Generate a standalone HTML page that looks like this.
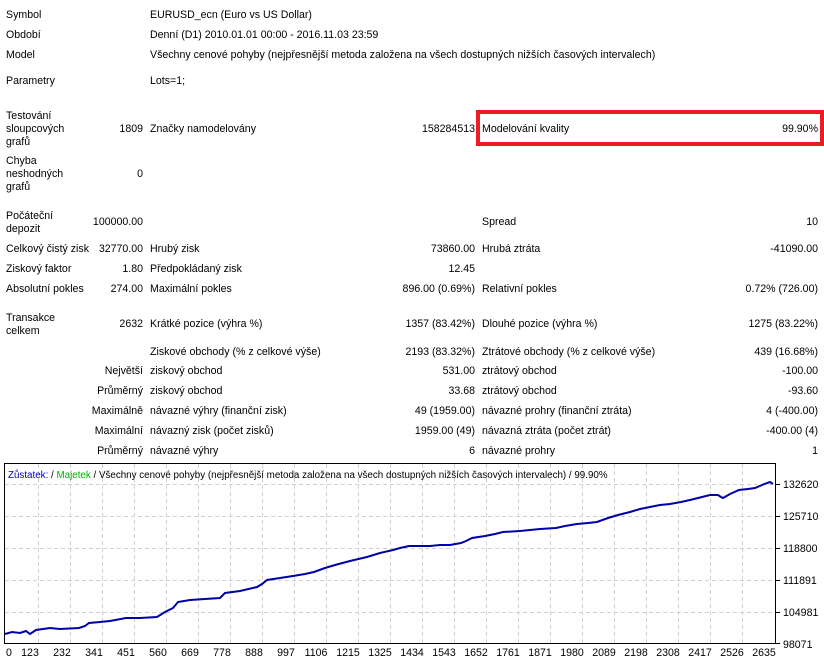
<!DOCTYPE html>
<html><head><meta charset="utf-8"><style>
body{margin:0;width:824px;height:662px;background:#fff;position:relative;overflow:hidden;font-family:Tahoma,"Liberation Sans",sans-serif;font-size:10.6px;color:#000}
.w{position:absolute;left:0;top:1px;width:824px;height:460px}
.t{position:absolute;line-height:13px;white-space:nowrap}
.r{text-align:right}
</style></head><body>
<div class="w">
<div class="t" style="left:6px;top:8px">Symbol</div>
<div class="t" style="left:150px;top:8px">EURUSD_ecn (Euro vs US Dollar)</div>
<div class="t" style="left:6px;top:28px">Období</div>
<div class="t" style="left:150px;top:28px">Denní (D1) 2010.01.01 00:00 - 2016.11.03 23:59</div>
<div class="t" style="left:6px;top:48px">Model</div>
<div class="t" style="left:150px;top:48px">Všechny cenové pohyby (nejpřesnější metoda založena na všech dostupných nižších časových intervalech)</div>
<div class="t" style="left:6px;top:74px">Parametry</div>
<div class="t" style="left:150px;top:74px">Lots=1;</div>

<div class="t" style="left:6px;top:109px">Testování<br>sloupcových<br>grafů</div>
<div class="t r" style="right:681px;top:122px">1809</div>
<div class="t" style="left:150px;top:122px">Značky namodelovány</div>
<div class="t r" style="right:349px;top:122px">158284513</div>
<div class="t" style="left:482px;top:122px">Modelování kvality</div>
<div class="t r" style="right:6px;top:122px">99.90%</div>

<div class="t" style="left:6px;top:154px">Chyba<br>neshodných<br>grafů</div>
<div class="t r" style="right:681px;top:167px">0</div>

<div class="t" style="left:6px;top:209px">Počáteční<br>depozit</div>
<div class="t r" style="right:681px;top:215px">100000.00</div>
<div class="t" style="left:482px;top:215px">Spread</div>
<div class="t r" style="right:6px;top:215px">10</div>

<div class="t" style="left:6px;top:242px">Celkový čistý zisk</div>
<div class="t r" style="right:681px;top:242px">32770.00</div>
<div class="t" style="left:150px;top:242px">Hrubý zisk</div>
<div class="t r" style="right:349px;top:242px">73860.00</div>
<div class="t" style="left:482px;top:242px">Hrubá ztráta</div>
<div class="t r" style="right:6px;top:242px">-41090.00</div>

<div class="t" style="left:6px;top:262px">Ziskový faktor</div>
<div class="t r" style="right:681px;top:262px">1.80</div>
<div class="t" style="left:150px;top:262px">Předpokládaný zisk</div>
<div class="t r" style="right:349px;top:262px">12.45</div>

<div class="t" style="left:6px;top:282px">Absolutní pokles</div>
<div class="t r" style="right:681px;top:282px">274.00</div>
<div class="t" style="left:150px;top:282px">Maximální pokles</div>
<div class="t r" style="right:349px;top:282px">896.00 (0.69%)</div>
<div class="t" style="left:482px;top:282px">Relativní pokles</div>
<div class="t r" style="right:6px;top:282px">0.72% (726.00)</div>

<div class="t" style="left:6px;top:311px">Transakce<br>celkem</div>
<div class="t r" style="right:681px;top:317px">2632</div>
<div class="t" style="left:150px;top:317px">Krátké pozice (výhra %)</div>
<div class="t r" style="right:349px;top:317px">1357 (83.42%)</div>
<div class="t" style="left:482px;top:317px">Dlouhé pozice (výhra %)</div>
<div class="t r" style="right:6px;top:317px">1275 (83.22%)</div>

<div class="t" style="left:150px;top:345px">Ziskové obchody (% z celkové výše)</div>
<div class="t r" style="right:349px;top:345px">2193 (83.32%)</div>
<div class="t" style="left:482px;top:345px">Ztrátové obchody (% z celkové výše)</div>
<div class="t r" style="right:6px;top:345px">439 (16.68%)</div>

<div class="t r" style="right:681px;top:364px">Největší</div>
<div class="t" style="left:150px;top:364px">ziskový obchod</div>
<div class="t r" style="right:349px;top:364px">531.00</div>
<div class="t" style="left:482px;top:364px">ztrátový obchod</div>
<div class="t r" style="right:6px;top:364px">-100.00</div>

<div class="t r" style="right:681px;top:384px">Průměrný</div>
<div class="t" style="left:150px;top:384px">ziskový obchod</div>
<div class="t r" style="right:349px;top:384px">33.68</div>
<div class="t" style="left:482px;top:384px">ztrátový obchod</div>
<div class="t r" style="right:6px;top:384px">-93.60</div>

<div class="t r" style="right:681px;top:404px">Maximálně</div>
<div class="t" style="left:150px;top:404px">návazné výhry (finanční zisk)</div>
<div class="t r" style="right:349px;top:404px">49 (1959.00)</div>
<div class="t" style="left:482px;top:404px">návazné prohry (finanční ztráta)</div>
<div class="t r" style="right:6px;top:404px">4 (-400.00)</div>

<div class="t r" style="right:681px;top:424px">Maximální</div>
<div class="t" style="left:150px;top:424px">návazný zisk (počet zisků)</div>
<div class="t r" style="right:349px;top:424px">1959.00 (49)</div>
<div class="t" style="left:482px;top:424px">návazná ztráta (počet ztrát)</div>
<div class="t r" style="right:6px;top:424px">-400.00 (4)</div>

<div class="t r" style="right:681px;top:444px">Průměrný</div>
<div class="t" style="left:150px;top:444px">návazné výhry</div>
<div class="t r" style="right:349px;top:444px">6</div>
<div class="t" style="left:482px;top:444px">návazné prohry</div>
<div class="t r" style="right:6px;top:444px">1</div>
</div>
<div style="position:absolute;left:476px;top:110px;width:340px;height:28px;border:4px solid #ed1c24"></div>

<svg style="position:absolute;left:0;top:0" width="824" height="662" xmlns="http://www.w3.org/2000/svg">
<g stroke="#d0d0d0" stroke-dasharray="4,3" stroke-width="1">
<line x1="5" y1="484.5" x2="776" y2="484.5"/><line x1="5" y1="516.5" x2="776" y2="516.5"/><line x1="5" y1="548.5" x2="776" y2="548.5"/><line x1="5" y1="580.5" x2="776" y2="580.5"/><line x1="5" y1="612.5" x2="776" y2="612.5"/>
<line x1="38.5" y1="464" x2="38.5" y2="643"/><line x1="70.5" y1="464" x2="70.5" y2="643"/><line x1="102.5" y1="464" x2="102.5" y2="643"/><line x1="134.5" y1="464" x2="134.5" y2="643"/><line x1="166.5" y1="464" x2="166.5" y2="643"/><line x1="198.5" y1="464" x2="198.5" y2="643"/><line x1="230.5" y1="464" x2="230.5" y2="643"/><line x1="262.5" y1="464" x2="262.5" y2="643"/><line x1="294.5" y1="464" x2="294.5" y2="643"/><line x1="326.5" y1="464" x2="326.5" y2="643"/><line x1="358.5" y1="464" x2="358.5" y2="643"/><line x1="390.5" y1="464" x2="390.5" y2="643"/><line x1="422.5" y1="464" x2="422.5" y2="643"/><line x1="454.5" y1="464" x2="454.5" y2="643"/><line x1="486.5" y1="464" x2="486.5" y2="643"/><line x1="518.5" y1="464" x2="518.5" y2="643"/><line x1="550.5" y1="464" x2="550.5" y2="643"/><line x1="582.5" y1="464" x2="582.5" y2="643"/><line x1="614.5" y1="464" x2="614.5" y2="643"/><line x1="646.5" y1="464" x2="646.5" y2="643"/><line x1="678.5" y1="464" x2="678.5" y2="643"/><line x1="710.5" y1="464" x2="710.5" y2="643"/><line x1="742.5" y1="464" x2="742.5" y2="643"/>
</g>
<rect x="4.5" y="463.5" width="771" height="180" fill="none" stroke="#000"/>
<g stroke="#000">
<line x1="776" y1="484.5" x2="780" y2="484.5"/><line x1="776" y1="516.5" x2="780" y2="516.5"/><line x1="776" y1="548.5" x2="780" y2="548.5"/><line x1="776" y1="580.5" x2="780" y2="580.5"/><line x1="776" y1="612.5" x2="780" y2="612.5"/><line x1="776" y1="643.5" x2="780" y2="643.5"/>
</g>
<polyline fill="none" stroke="#0000a8" stroke-width="2" points="5,634 12,632 20,633 26,631 30,634 36,630 50,628 60,629 79,628 85,626 89,623 100,622 110,621 126,618 140,618 157,617 165,612 173,608 178,602 190,600 205,599 220,598 225,593 240,591 257,587 262,584 267,580 280,578 293,576 305,574 314,572 325,568 335,565 350,561 367,557 380,553 393,550 400,548 409,546 420,546 430,546 440,545 450,545 461,543 466,541 472,538 485,536 495,534 503,532 520,531 540,529 556,528 565,526 577,524 588,523 597,522 608,518 618,515 630,512 640,509 650,507 660,505 670,504 681,502 690,500 702,497 710,495 718,495 721,497 723,498 730,494 739,490 748,489 755,488 762,485 770,482 773,484"/>
<g font-family="Tahoma,'Liberation Sans',sans-serif" font-size="10.6" fill="#000">
<text x="783" y="488">132620</text><text x="783" y="520">125710</text><text x="783" y="552">118800</text><text x="783" y="584">111891</text><text x="783" y="616">104981</text><text x="783" y="648">98071</text>
</g>
<g font-family="Tahoma,'Liberation Sans',sans-serif" font-size="10.6" fill="#000" text-anchor="middle">
<text x="9" y="656">0</text><text x="30" y="656">123</text><text x="62" y="656">232</text><text x="94" y="656">341</text><text x="126" y="656">451</text><text x="158" y="656">560</text><text x="190" y="656">669</text><text x="222" y="656">778</text><text x="254" y="656">888</text><text x="286" y="656">997</text><text x="316" y="656">1106</text><text x="348" y="656">1215</text><text x="380" y="656">1325</text><text x="412" y="656">1434</text><text x="444" y="656">1543</text><text x="476" y="656">1652</text><text x="508" y="656">1761</text><text x="540" y="656">1871</text><text x="572" y="656">1980</text><text x="604" y="656">2089</text><text x="636" y="656">2198</text><text x="668" y="656">2308</text><text x="700" y="656">2417</text><text x="732" y="656">2526</text><text x="764" y="656">2635</text>
</g>
<text x="8" y="478" font-family="Tahoma,'Liberation Sans',sans-serif" font-size="9.8"><tspan fill="#0000c0">Zůstatek:</tspan> / <tspan fill="#00b000">Majetek</tspan> / Všechny cenové pohyby (nejpřesnější metoda založena na všech dostupných nižších časových intervalech) / 99.90%</text>
</svg>
</body></html>
